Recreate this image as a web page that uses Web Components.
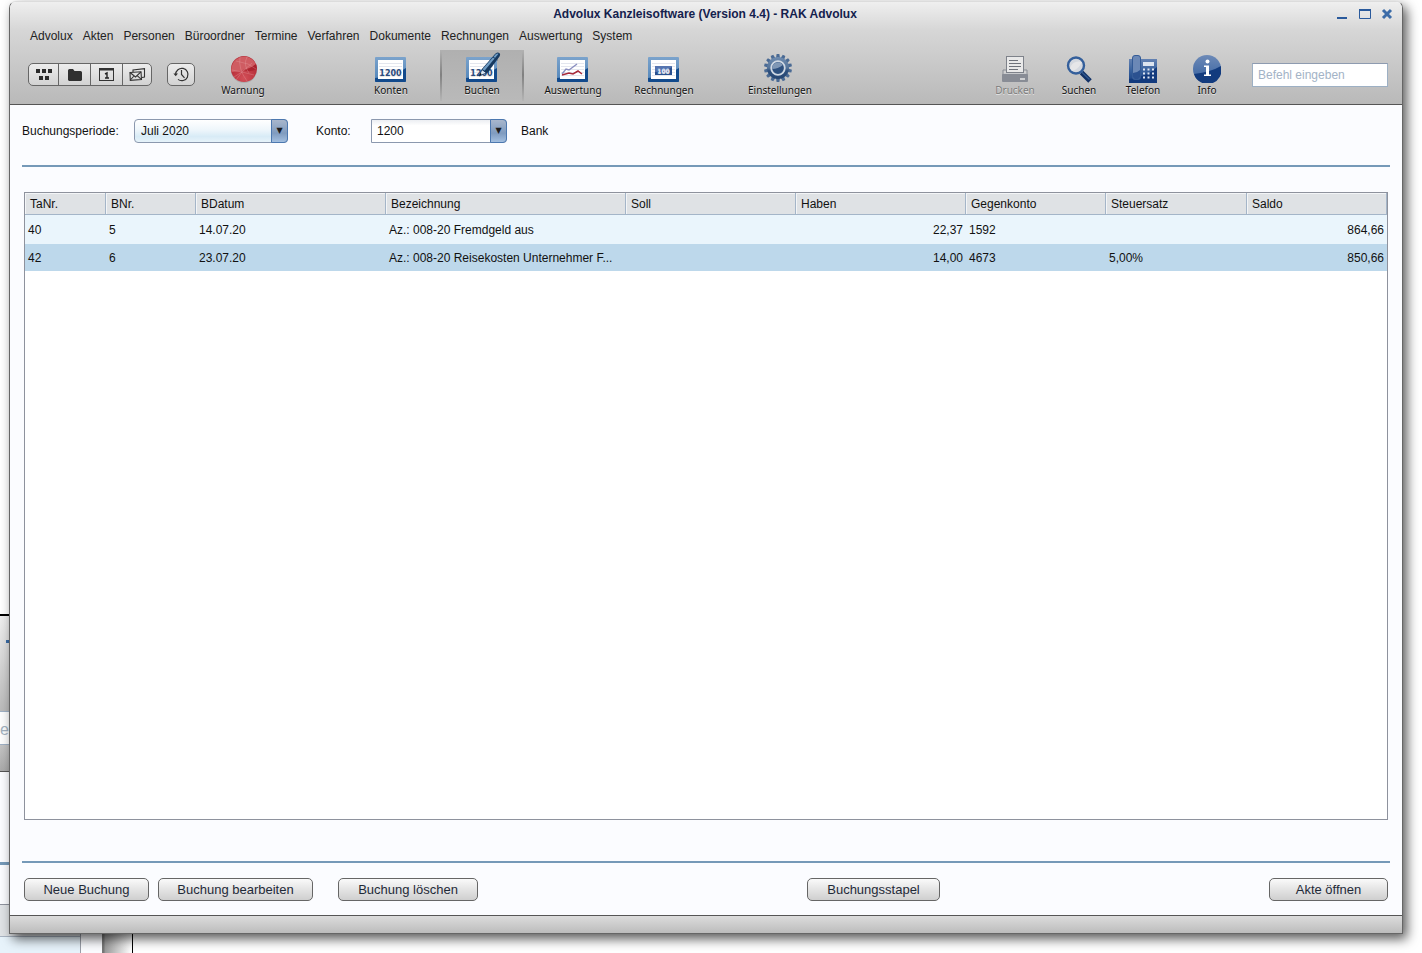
<!DOCTYPE html>
<html lang="de">
<head>
<meta charset="utf-8">
<title>Advolux Kanzleisoftware (Version 4.4) - RAK Advolux</title>
<style>
html, body { margin: 0; height: 100%; }
body { background: #fff; font: 12px/16px "Liberation Sans", Arial, sans-serif; color: #111; overflow: hidden; }
</style>
</head>
<body>
<adv-desktop></adv-desktop>

<script>
const define = (name, html, setup) => {
  const tpl = document.createElement('template');
  tpl.innerHTML = html;
  customElements.define(name, class extends HTMLElement {
    constructor() {
      super();
      this.attachShadow({ mode: 'open' }).append(tpl.content.cloneNode(true));
    }
    connectedCallback() { if (setup) setup(this, this.shadowRoot); }
  });
};

/* Edge of a second window lying behind the main one */
define('adv-back-window', `
<style>
:host { position: absolute; left: 0; top: 614px; width: 133px; bottom: 0; display: flex; flex-direction: column; overflow: hidden; border-top: 2px solid #000; box-sizing: border-box; }
.bar { height: 95px; background: linear-gradient(#efefef, #bababa); }
.bar i { display: block; width: 9px; height: 27px; border-bottom: 3px solid #3a6da8; box-sizing: border-box; margin-left: 6px; }
.field { height: 34px; background: #fdfdfd; border: solid #9fb0c4; border-width: 1px 0; box-sizing: border-box; color: #a4b2c0; font-size: 16px; line-height: 36px; }
.strip { height: 27px; background: linear-gradient(#c4c4c4, #aaa); border-bottom: 1px solid #555; box-sizing: border-box; }
.body { flex: 1; display: grid; grid-template-columns: 81px 21px 29px 2px; }
.cells { display: flex; flex-direction: column; background: #fbfcff; border-right: 1px solid #9a9ea8; }
.one { height: 90px; border-bottom: 3px solid #7599b8; }
.two { height: 39px; border-bottom: 1px solid #8e929d; }
.head { height: 31px; background: #dfe2e5; border-bottom: 1px solid #a9b4c2; }
.row { flex: 1; background: #e7f3fb; }
.gap { background: #fbfcff; }
.shade { background: linear-gradient(90deg, #777 0 2px, #999 3px, #fff); }
.edge { border-right: 1px solid #000; }
</style>
<div class="bar"><i></i></div>
<div class="field">e</div>
<div class="strip"></div>
<div class="body">
  <div class="cells"><div class="one"></div><div class="two"></div><div class="head"></div><div class="row"></div></div>
  <div class="gap"></div><div class="shade"></div><div class="edge"></div>
</div>`);

const card = inner => `<defs><linearGradient id="g" x2="0" y2="1"><stop offset="0" stop-color="#7ba3cc"/><stop offset="1" stop-color="#4f83b8"/></linearGradient></defs><rect width="31" height="25" rx="1" fill="url(#g)"/><path d="M31 11V24q0 1-1 1H1q-1 0-1-1V21C12 20 22 17 31 11Z" fill="#124a8c"/><rect x="3" y="3" width="25" height="19" fill="#fff"/><path d="M4 6.500H27M4 9.500H27M4 12.500H27M4 15.500H27M4 18.500H27" stroke="#e3e6ee"/>${inner}`;
const cardSvg = inner => `<svg width="32" height="25" viewBox="0 0 32 25">${card(inner)}</svg>`;
const number = `<text x="15.500" y="19" text-anchor="middle" font-family="DejaVu Sans" font-weight="bold" font-size="8" fill="#2b4c7e">1200</text>`;
const gearTeeth = Array.from({ length: 14 }, (_, i) => `<path d="M12.600 0H15.400L16 4.500H12Z" transform="rotate(${i * 360 / 14} 14 14)"/>`).join('');

const icons = {
  grid: `<svg width="18" height="13"><path d="M1 1h4v4H1zM7 1h4v4H7zM13 1h4v4h-4zM4 8h4v4H4zM10 8h4v4h-4z" fill="#2b2b2b"/></svg>`,
  folder: `<svg width="16" height="14"><path d="M1 2.500Q1 1 2.500 1H6L7.500 3H13.500Q15 3 15 4.500V12L14 13H2L1 12Z" fill="#303030"/></svg>`,
  calendar: `<svg width="15" height="13"><rect x=".5" y=".5" width="14" height="12" fill="none" stroke="#333"/><path d="M1 1.500H14" stroke="#333" stroke-width="2"/><path d="M6 6L8 5V10M6 10H10" fill="none" stroke="#222" stroke-width="1.400"/></svg>`,
  mail: `<svg width="17" height="13" fill="none" stroke="#333" stroke-width="1.100"><path d="M4 4V2L15.500.700V9L13 9.500"/><path d="M1 4.500L12 3.800L12.500 11.500L1.300 12.300Z"/><path d="M1 4.500L6.500 9L12 3.800M1.300 12L5 8M12.300 11.300L8.200 7.700"/></svg>`,
  clock: `<svg width="17" height="15" fill="none" stroke="#333" stroke-width="1.200"><path d="M2.600 7.500A6.200 6.200 0 1 1 5 12.400"/><path d="M8.500 3V7.500L11.500 10.800"/><path d="M.4 6.500L2.700 9.200L5 6.500Z" fill="#333" stroke="none"/></svg>`,
  globe: `<svg width="28" height="27" viewBox="0 0 28 27"><defs><radialGradient id="g" cy=".85" r=".6"><stop offset="0" stop-color="#d24f58"/><stop offset="1" stop-color="#b52c37"/></radialGradient></defs><ellipse cx="15" cy="14" rx="13" ry="13" fill="#8a8a8a" opacity=".4"/><circle cx="15" cy="13" r="13" fill="url(#g)"/><path d="M2.500 16A13 13 0 0 1 27 8Q18 16 2.500 16Z" fill="#cf5c62"/><path d="M14 14Q22 12 27 8L28 12Q24 17 14 14Z" fill="#a51d28" opacity=".7"/><path d="M11 1Q9 13 18 25M3 14L13 16L23 7M5 21L13 16L25 19M18 1Q14 9 20 17M7 5L19 8L27 13M13 16L7 24" fill="none" stroke="#eaa4a6" stroke-width=".6" opacity=".55"/></svg>`,
  konten: cardSvg(number),
  buchen: `<svg width="32" height="30" viewBox="0 0 32 30" overflow="visible"><g transform="translate(0 5)">${card(number)}</g><path d="M13 24L16 17.500L20.500 21Z" fill="#dbe6f1" stroke="#1b416c" stroke-width=".9"/><path d="M13 24L14.300 21L15.800 22.300Z" fill="#111"/><path d="M15.500 17.500L29 2Q31-.5 33.500 1Q34.800 2.500 33.500 4.500L21 21.500Z" fill="#16395f"/><path d="M16.500 17.200L29.500 2.500Q31 1 32.500 1.700L18.500 18.800Z" fill="#6f9cc4"/><path d="M27 5L31.500 8" stroke="#16395f"/></svg>`,
  chart: cardSvg(`<path d="M5 17L9 12L12 13L16 10L20 7" fill="none" stroke="#8b8fc0" stroke-width="1.400"/><path d="M5 18L12 16L16 17L21 14L25 17" fill="none" stroke="#a82a3a" stroke-width="1.500"/>`),
  money: cardSvg(`<rect x="7" y="9" width="17" height="9" fill="#5574b0"/><path d="M7 18V15Q17 15 24 10V18Z" fill="#29508f"/><text x="15.500" y="16" text-anchor="middle" font-family="DejaVu Sans" font-weight="bold" font-size="6" fill="#dbe5f5">100</text>`),
  gear: `<svg width="33" height="28" viewBox="0 0 33 28"><defs><linearGradient id="g" x2="0" y2="28" gradientUnits="userSpaceOnUse"><stop offset=".1" stop-color="#6f8cb0"/><stop offset=".5" stop-color="#557499"/><stop offset=".6" stop-color="#2d4f7d"/><stop offset="1" stop-color="#23426e"/></linearGradient></defs><g fill="#4a6a94">${gearTeeth}</g><circle cx="14" cy="14" r="11" fill="url(#g)"/><circle cx="14" cy="14" r="6.800" fill="#2d507f" stroke="#ced7e2" stroke-width="1.800"/><path d="M8.200 15A5.800 5.800 0 0 1 18.800 11Q14 15 8.200 15Z" fill="#7f97b5"/></svg>`,
  printer: `<svg width="26" height="27" viewBox="0 0 26 27"><path d="M4 14H1V24H25V14H22" fill="#d0d0d0" stroke="#888c94"/><rect x="4.500" y=".5" width="17" height="16" fill="#e9e9e9" stroke="#7e828a"/><path d="M7 4.500H16M7 7.500H19M7 10.500H19M7 13.500H16" stroke="#6e727a"/><path d="M2 17H24V20H2Z" fill="#c8cacd"/><rect x="0" y="18" width="26" height="8" rx="1" fill="#888c95"/><path d="M18 23H23" stroke="#e7e7e7" stroke-width="1.500"/></svg>`,
  search: `<svg width="27" height="27" viewBox="0 0 27 27"><path d="M15.500 16.500L24 25" stroke="#123266" stroke-width="5"/><path d="M15 15.500L23.500 23.500" stroke="#345b91" stroke-width="1.200"/><circle cx="10" cy="9.500" r="8" fill="#d4d8df" stroke="#345f9b" stroke-width="2.400"/><path d="M4 12Q7 4 16 6Q12 14 6 15Z" fill="#e6e6e8"/></svg>`,
  phone: `<svg width="28" height="28" viewBox="0 0 28 28"><defs><linearGradient id="g" x2="0" y2="1"><stop offset="0" stop-color="#6482b2"/><stop offset=".5" stop-color="#36609d"/><stop offset="1" stop-color="#173d80"/></linearGradient></defs><rect x="0" y="4" width="28" height="24" fill="url(#g)"/><path d="M0 24Q18 22 28 12V28H0Z" fill="#123a7d"/><rect x="3.500" y=".5" width="8" height="24" rx="2.500" fill="#6b88b6" stroke="#345b96"/><path d="M4 18Q8 18 11 15V22Q11 24 9 24H6Q4 24 4 22Z" fill="#2b5190"/><rect x="14" y="7" width="11" height="4" fill="#dce4ef"/><path d="M14 14.500H25M14 18.500H25M14 22.500H25" stroke="#dde5f2" stroke-width="2" stroke-dasharray="2 2.500"/></svg>`,
  info: `<svg width="28" height="28" viewBox="0 0 28 28"><defs><linearGradient id="g" x2="0" y2="1"><stop offset="0" stop-color="#6d8ab7"/><stop offset="1" stop-color="#345f9f"/></linearGradient></defs><circle cx="14" cy="14" r="14" fill="url(#g)"/><path d="M1 19Q18 17 28 11A14 14 0 0 1 1 19Z" fill="#123b7e"/><circle cx="14.500" cy="6.500" r="2" fill="#fff"/><path d="M11 10.500H16V19.500H18V21H11V19.500H13V12H11Z" fill="#fff"/></svg>`,
  min: `<svg width="12" height="13"><path d="M1 10H11" stroke="#2a5a9c" stroke-width="2"/></svg>`,
  max: `<svg width="12" height="13"><path d="M.5 2V10.500H11.500V2" fill="none" stroke="#2a5a9c"/><path d="M0 2H12" stroke="#2a5a9c" stroke-width="2"/></svg>`,
  close: `<svg width="12" height="13"><path d="M2 2L10 10M10 2L2 10" stroke="#3c6ca8" stroke-width="3"/></svg>`
};

define('adv-icon', `<style>:host { display: block; } svg { display: block; }</style>`, (el, root) => {
  if (!root.querySelector('svg')) root.innerHTML += icons[el.getAttribute('name')] || '';
});

define('adv-title-bar', `
<style>
:host { display: grid; grid-template-columns: 64px 1fr 64px; align-items: center; height: 24px; padding: 0 9px 0 7px; }
h1 { margin: 0; grid-column: 2; text-align: center; font: bold 12px/16px "Liberation Sans", Arial, sans-serif; color: #14214d; }
div { display: flex; justify-content: space-between; padding-left: 7px; }
button { border: 0; padding: 0; background: none; }
</style>
<h1><slot></slot></h1>
<div>
  <button aria-label="Minimieren"><adv-icon name="min"></adv-icon></button>
  <button aria-label="Maximieren"><adv-icon name="max"></adv-icon></button>
  <button aria-label="Schließen"><adv-icon name="close"></adv-icon></button>
</div>`);

define('adv-menu', `
<style>
:host { display: flex; gap: 10px; padding: 2px 20px 4px; }
::slotted(a) { color: #222; text-decoration: none; }
</style><slot></slot>`);

define('adv-segment', `
<style>
:host { display: flex; height: 23px; box-sizing: border-box; border: 1px solid #666; border-radius: 5px; background: linear-gradient(#ededed, #d2d2d2); overflow: hidden; }
button { width: 32px; box-sizing: border-box; padding: 0; border: 0; border-left: 1px solid #666; background: none; display: grid; place-items: center; }
button:first-of-type { border-left: 0; width: 29px; }
button:last-of-type { width: 29px; }
:host([single]) button { width: 26px; }
</style>`, (el, root) => {
  if (root.querySelector('button')) return;
  root.innerHTML += el.getAttribute('items').split(',').map(item => {
    const [icon, label] = item.split(':');
    return `<button aria-label="${label}"><adv-icon name="${icon}"></adv-icon></button>`;
  }).join('');
});

define('adv-tool', `
<style>
:host { display: block; width: 84px; }
:host([narrow]) { width: 64px; }
button { width: 100%; height: 54px; padding: 0 0 7px; border: 0; background: none; display: flex; flex-direction: column; align-items: center; justify-content: flex-end; gap: 2px; font: 10px/13px "Noto Sans", sans-serif; color: #111; text-shadow: 0 1px 0 #e4e4e4; white-space: nowrap; }
:host([narrow]) button, :host([icon="globe"]) button { gap: 1px; }
:host([active]) button { background: linear-gradient(#b0b0b0, #b9b9b9) 0 0 / 100% 50px no-repeat; border: solid; border-width: 0 2px; border-image: linear-gradient(#b4b4b4, #808080 46%, #b4b4b4 92%, transparent 92%) 1; }
:host([disabled]) button { color: #7c7c7c; }
</style>
<button><slot></slot></button>`, (el, root) => {
  const button = root.querySelector('button');
  if (button.querySelector('adv-icon')) return;
  const icon = document.createElement('adv-icon');
  icon.setAttribute('name', el.getAttribute('icon'));
  button.prepend(icon);
  button.disabled = el.hasAttribute('disabled');
});

define('adv-toolbar', `
<style>
:host { display: flex; align-items: flex-start; height: 56px; box-sizing: border-box; padding: 2px 14px 0 18px; }
adv-segment { margin-top: 13px; }
.history { margin-left: 15px; }
.warn { margin-left: 6px; }
.group { display: flex; gap: 7px; margin-left: 64px; }
.settings { margin-left: 32px; }
.right { display: flex; margin-left: auto; }
input { width: 136px; height: 24px; box-sizing: border-box; margin: 13px 0 0 13px; padding: 0 5px; border: 1px solid #9db0c4; border-top-color: #8e9bb0; background: #fff; font: 12px/16px "Liberation Sans", Arial, sans-serif; }
input::placeholder { color: #a3b3c6; opacity: 1; }
</style>
<adv-segment items="grid:Übersicht,folder:Akten,calendar:Kalender,mail:Nachrichten"></adv-segment>
<adv-segment single class="history" items="clock:Verlauf"></adv-segment>
<adv-tool class="warn" icon="globe">Warnung</adv-tool>
<div class="group">
  <adv-tool icon="konten">Konten</adv-tool>
  <adv-tool icon="buchen" active>Buchen</adv-tool>
  <adv-tool icon="chart">Auswertung</adv-tool>
  <adv-tool icon="money">Rechnungen</adv-tool>
</div>
<adv-tool class="settings" icon="gear">Einstellungen</adv-tool>
<div class="right">
  <adv-tool narrow icon="printer" disabled>Drucken</adv-tool>
  <adv-tool narrow icon="search">Suchen</adv-tool>
  <adv-tool narrow icon="phone">Telefon</adv-tool>
  <adv-tool narrow icon="info">Info</adv-tool>
  <input placeholder="Befehl eingeben" aria-label="Befehl eingeben">
</div>`);

define('adv-filter', `
<style>
:host { display: flex; align-items: center; height: 24px; }
label { width: 112px; }
.second { width: 55px; margin-left: 28px; }
.box { position: relative; display: block; width: 154px; }
.narrow { width: 136px; }
select { width: 100%; height: 24px; box-sizing: border-box; padding: 0 24px 0 6px; margin: 0; border: 1px solid #8b98ae; appearance: none; border-radius: 4px; background: linear-gradient(#fff, #eef6fb 45%, #d8ebf6 75%, #e6f3fa); font: 12px/16px "Liberation Sans", Arial, sans-serif; color: #111; display: block; }
.narrow select { border-radius: 0 4px 4px 0; background: linear-gradient(#eceef2, #fff 25%); padding-left: 5px; }
.box::after { content: "▼"; position: absolute; right: 0; top: 0; width: 17px; height: 24px; box-sizing: border-box; border: 1px solid #4c78b0; border-radius: 0 4px 4px 0; background: linear-gradient(#a9b7cc, #7f9bbf 60%, #a3bfe0); font: 8px/22px "DejaVu Sans", sans-serif; color: #1c1c1c; text-align: center; pointer-events: none; }
output { margin-left: 14px; }
</style>
<label for="p">Buchungsperiode:</label>
<span class="box"><select id="p"><option>Juli 2020</option></select></span>
<label for="k" class="second">Konto:</label>
<span class="box narrow"><select id="k"><option>1200</option></select></span>
<output for="k">Bank</output>`);

define('adv-ledger', `
<style>
:host { display: block; border: 1px solid #8e929d; background: #fff; box-sizing: border-box; }
table { width: 100%; border-collapse: separate; border-spacing: 0; table-layout: fixed; }
th { height: 22px; box-sizing: border-box; padding: 0 5px; border-right: 1px solid #a4b5c8; border-bottom: 1px solid #a4b5c8; background: #dfe2e5; box-shadow: inset 1px 1px 0 #f3f5f7; font-weight: normal; text-align: left; }
td { height: 29px; box-sizing: border-box; padding: 0 3px; white-space: nowrap; overflow: hidden; text-overflow: ellipsis; background: #eaf5fc; }
td.n { text-align: right; }
tr[aria-selected] td { background: #bdd8eb; height: 27px; }
</style>
<table>
<colgroup><col style="width:81px"><col style="width:90px"><col style="width:190px"><col style="width:240px"><col style="width:170px"><col style="width:170px"><col style="width:140px"><col style="width:141px"><col></colgroup>
<thead><tr><th>TaNr.</th><th>BNr.</th><th>BDatum</th><th>Bezeichnung</th><th>Soll</th><th>Haben</th><th>Gegenkonto</th><th>Steuersatz</th><th>Saldo</th></tr></thead>
<tbody>
<tr><td>40</td><td>5</td><td>14.07.20</td><td>Az.: 008-20 Fremdgeld aus</td><td></td><td class="n">22,37</td><td>1592</td><td></td><td class="n">864,66</td></tr>
<tr aria-selected="true"><td>42</td><td>6</td><td>23.07.20</td><td>Az.: 008-20 Reisekosten Unternehmer F...</td><td></td><td class="n">14,00</td><td>4673</td><td>5,00%</td><td class="n">850,66</td></tr>
</tbody>
</table>`);

define('adv-button', `
<style>
:host { display: block; }
button { display: block; height: 23px; width: 100%; padding: 0; border: 1px solid #666; border-radius: 5px; background: linear-gradient(#fafafa, #e6e6e6 45%, #cfcfcf); font: 13px/16px "Liberation Sans", Arial, sans-serif; color: #1f2a38; }
</style><button><slot></slot></button>`);

define('adv-actions', `
<style>
:host { display: flex; padding: 0 2px; }
.new { width: 125px; }
.edit { width: 155px; margin-left: 9px; }
.delete { width: 140px; margin-left: 25px; }
.batch { width: 133px; margin-left: 329px; }
.open { width: 119px; margin-left: auto; }
</style>
<adv-button class="new">Neue Buchung</adv-button>
<adv-button class="edit">Buchung bearbeiten</adv-button>
<adv-button class="delete">Buchung löschen</adv-button>
<adv-button class="batch">Buchungsstapel</adv-button>
<adv-button class="open">Akte öffnen</adv-button>`);

define('adv-window', `
<style>
:host { position: relative; display: flex; flex-direction: column; box-sizing: border-box; flex: 1; border: 1px solid #666; border-top-color: #dcdcdc; border-radius: 7px 7px 0 0; background: #fbfcff; box-shadow: 4px 5px 12px rgba(0,0,0,.65); overflow: hidden; }
header { background: linear-gradient(#efefef, #d6d6d6 28%, #b9b9b9); border-bottom: 1px solid #555; }
main { flex: 1; display: flex; flex-direction: column; padding: 14px 12px 0; }
hr { width: 100%; height: 2px; border: 0; margin: 0; background: #7599b8; }
adv-filter { margin-bottom: 22px; }
adv-ledger { flex: 1; margin: 25px 2px 41px; }
adv-actions { margin: 15px 0 14px; }
footer { height: 17px; border-top: 1px solid #555; background: linear-gradient(#dcdcdc, #bcbcbc); }
</style>
<header>
  <adv-title-bar>Advolux Kanzleisoftware (Version 4.4) - RAK Advolux</adv-title-bar>
  <adv-menu><a href="#">Advolux</a><a href="#">Akten</a><a href="#">Personen</a><a href="#">Büroordner</a><a href="#">Termine</a><a href="#">Verfahren</a><a href="#">Dokumente</a><a href="#">Rechnungen</a><a href="#">Auswertung</a><a href="#">System</a></adv-menu>
  <adv-toolbar></adv-toolbar>
</header>
<main>
  <adv-filter></adv-filter>
  <hr>
  <adv-ledger></adv-ledger>
  <hr>
  <adv-actions></adv-actions>
</main>
<footer></footer>`);

define('adv-desktop', `
<style>
:host { position: relative; display: flex; height: 100vh; box-sizing: border-box; padding: 1px 19px 19px 9px; }
</style>
<adv-back-window></adv-back-window>
<adv-window></adv-window>`);
</script>
</body>
</html>
